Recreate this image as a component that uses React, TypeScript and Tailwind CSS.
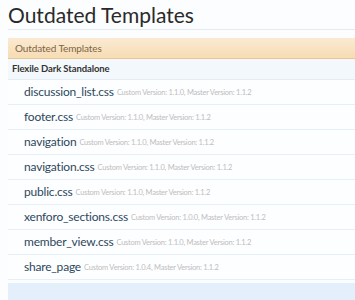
const templates = [
    { name: "discussion_list.css", custom: "1.1.0" },
    { name: "footer.css", custom: "1.1.0" },
    { name: "navigation", custom: "1.1.0" },
    { name: "navigation.css", custom: "1.1.0" },
    { name: "public.css", custom: "1.1.0" },
    { name: "xenforo_sections.css", custom: "1.0.0" },
    { name: "member_view.css", custom: "1.1.0" },
    { name: "share_page", custom: "1.0.4" },
];

function App() {
    return (
        <div className="w-[355px] h-[300px] overflow-hidden bg-[#fcfdff] font-['Lato',sans-serif]">
            <div className="pl-2">
                <h1 className="h-[30px] text-[21px] leading-[28px] text-[#2a2a2a] border-b border-[#e3ebf1] pt-[1px]">
                    Outdated Templates
                </h1>
                <div className="mt-[8px]">
                    <div className="h-[21px] flex items-center pl-[7px] text-[10px] tracking-[-0.1px] text-[#7a6447] bg-gradient-to-b from-[#fbead3] to-[#f7dcb3] border-b border-[#e6c897]">
                        Outdated Templates
                    </div>
                    <div className="h-[21px] flex items-center pl-[4px] text-[9.5px] tracking-[-0.1px] font-bold text-[#333] bg-[#f3f8fc] border-b border-[#e4edf4]">
                        Flexile Dark Standalone
                    </div>
                    {templates.map((t) => (
                        <div
                            key={t.name}
                            className="h-[25px] flex items-center pl-[16px] border-b border-[#e6eff5] bg-[#fdfeff]"
                        >
                            <span className="text-[12px] tracking-[-0.2px] text-[#2d485c]">{t.name}</span>
                            <span className="ml-[3px] mt-[1px] text-[7.5px] tracking-[-0.25px] text-[#bdbdbd]">
                                Custom Version: {t.custom}, Master Version: 1.1.2
                            </span>
                        </div>
                    ))}
                    <div className="h-[3px]" />
                    <div className="h-[20px] bg-[#e3f0fb]" />
                </div>
            </div>
        </div>
    );
}

export default App;
